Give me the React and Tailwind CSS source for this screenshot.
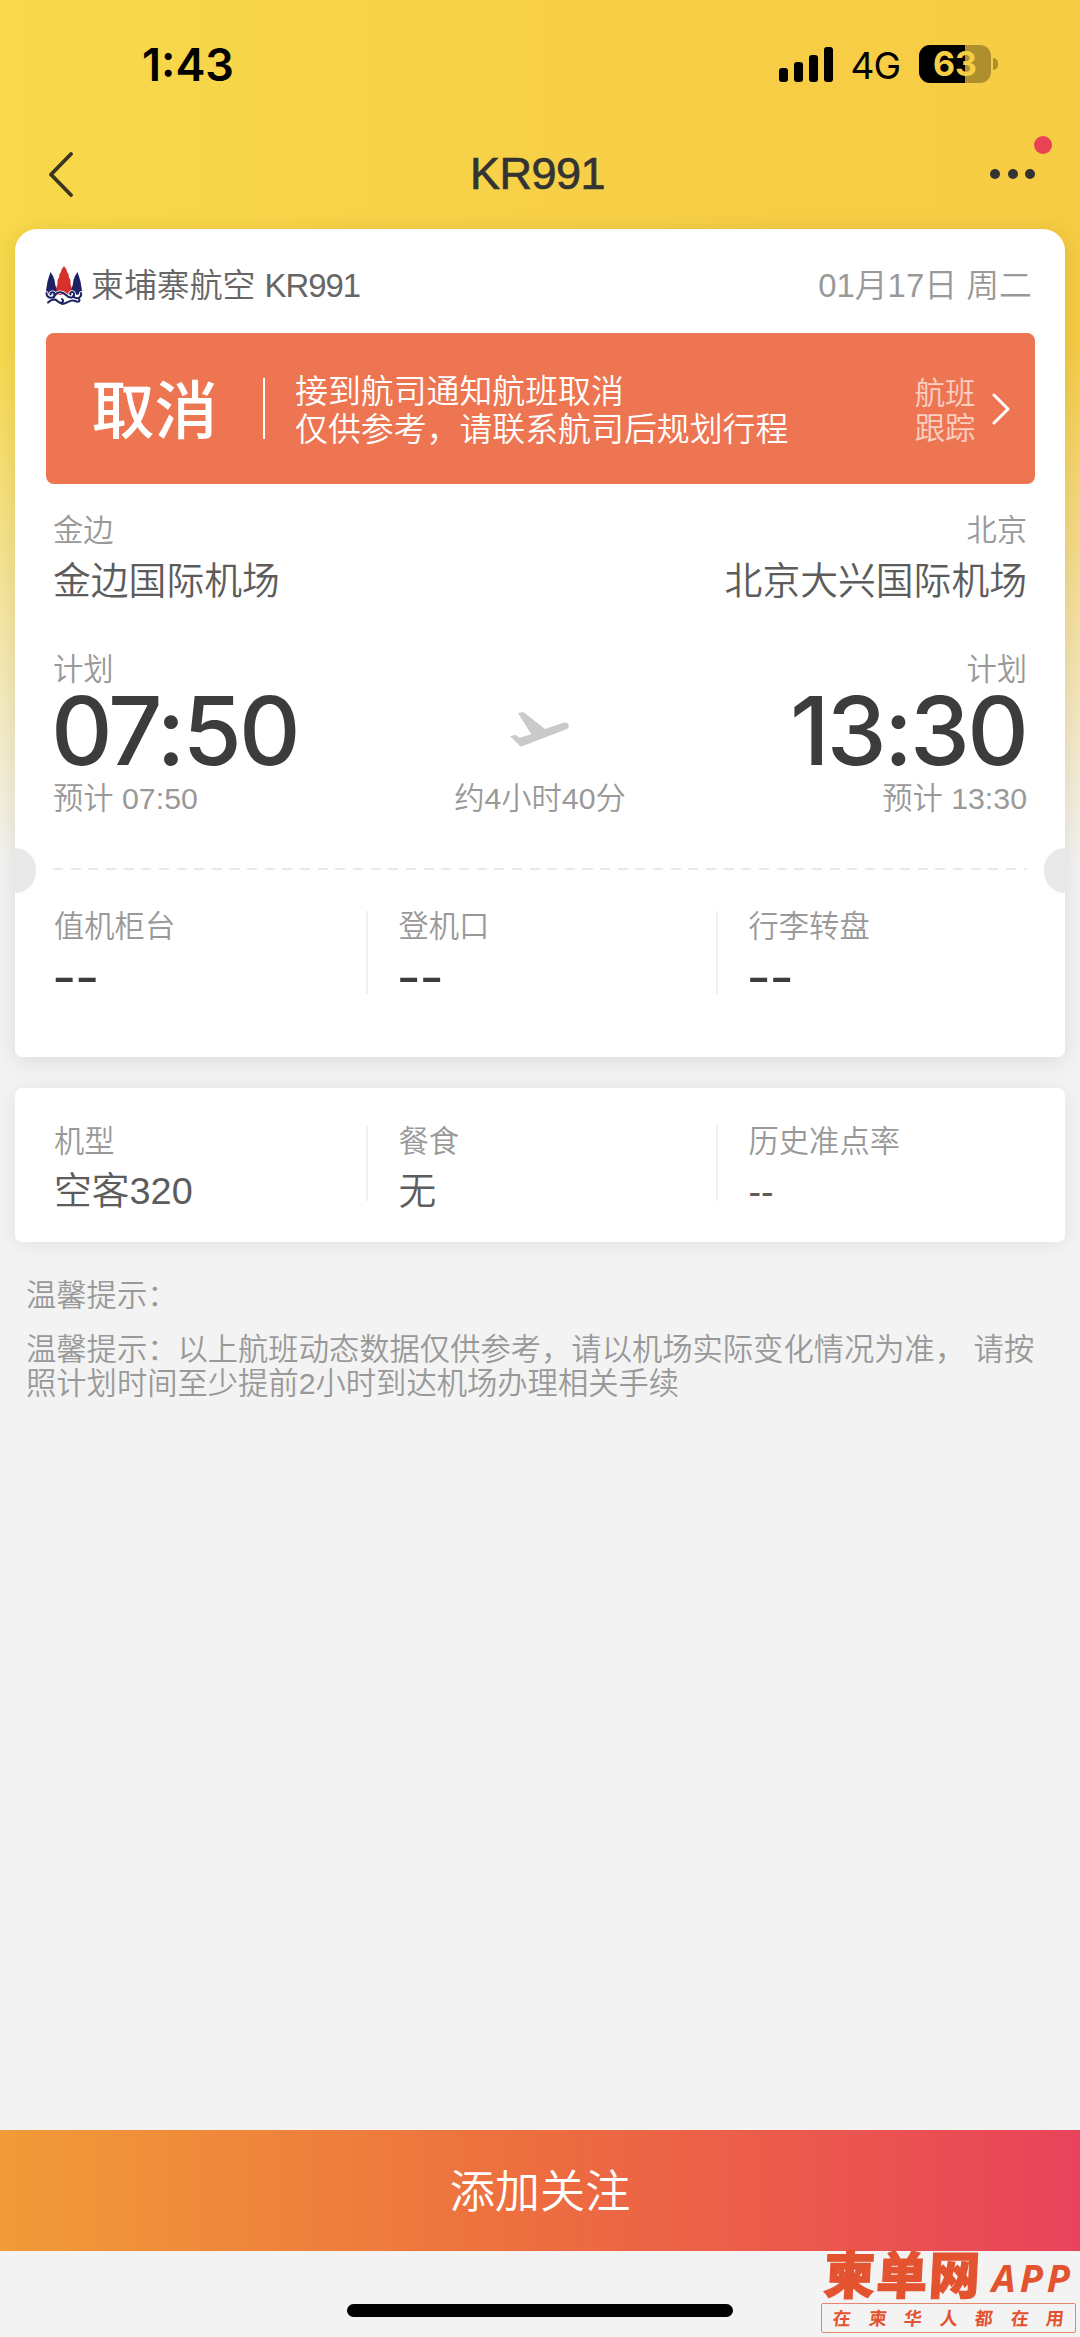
const SIGNAL_BARS = ['h-[14px]', 'h-[20px]', 'h-[27px]', 'h-[35px]']

const GATE_INFO = [
  { label: '值机柜台', value: '--' },
  { label: '登机口', value: '--' },
  { label: '行李转盘', value: '--' },
]

const PLANE_INFO = [
  { label: '机型', value: '空客320' },
  { label: '餐食', value: '无' },
  { label: '历史准点率', value: '--' },
]

const WAVES = 'M1.500 27c0 6 8 6 8 1.500c0-3-4-3-4 0M9 31c3-6 8-6 12-2s9 3 8-1.500c-1-3-5-1-3.500 1M36 27c1 5-5 7-8 3M3 36.500c4-4 7-4 10-1s7 0 4-2.500M17 38c5 0 8-5 13-3s5-1 4-2'

function AirlineLogo() {
  return (
    <svg viewBox="0 0 38 40" className="h-[40px] w-[38px]">
      <path d="M5.500 6l2.500 4 1.500 4 1 6 2.500 4.500-.5 5-8-1-3.500-4 1.500-9 1.500-5z" fill="#1d2164" />
      <path d="M32.500 6l-2.500 4-1.500 4-1 6-2.500 4.500.5 5 8-1 3.500-4-1.500-9-1.500-5z" fill="#1d2164" />
      <path d="M19 0l2.500 3.500 .5 2.500 1.500 2 .5 3.500 1.500 2.500v4l1 3v4l-2 4H13.500l-2-4v-4l1-3v-4l1.500-2.500.5-3.500 1.500-2L16.500 3.500z" fill="#d7302b" />
      <path d={WAVES} fill="none" stroke="#fff" strokeWidth="3.600" strokeLinecap="round" />
      <path d={WAVES} fill="none" stroke="#1d2164" strokeWidth="2" strokeLinecap="round" />
    </svg>
  )
}

function StatusBar() {
  return (
    <div className="flex h-[128px] items-center pl-[142px] pr-[82px] font-['Inter'] text-black">
      <span className="text-[45px] font-semibold leading-none">1:43</span>
      <div className="ml-auto flex items-center">
        <div className="flex items-end gap-[5.500px]">
          {SIGNAL_BARS.map((h) => (
            <div key={h} className={`w-[9.500px] rounded-[3px] bg-black ${h}`} />
          ))}
        </div>
        <span className="ml-[17px] pt-[2px] text-[37px] leading-none tracking-[-1px]">4G</span>
        <div className="ml-[19px] flex h-[38px] w-[72px] items-center justify-center rounded-[11px] bg-[linear-gradient(90deg,#000_64%,#ad8f2d_64%)] text-[34px] font-bold leading-none text-[#f6ce45]">
          63
        </div>
        <div className="ml-[2px] h-[12px] w-[5px] rounded-r-full bg-[#ad8f2d]" />
      </div>
    </div>
  )
}

function NavBar() {
  return (
    <div className="flex h-[101px] items-start justify-between pl-[48px] pr-[45px] pt-[23px] text-[#333]">
      <svg viewBox="0 0 26 46" className="h-[46px] w-[26px]" fill="none" stroke="#3a361f" strokeWidth="3.800" strokeLinecap="round" strokeLinejoin="round">
        <path d="M23 3L3 23.500L23 44" />
      </svg>
      <h1 className="-mt-[1px] ml-[11px] text-[45px] leading-[48px] tracking-[-0.500px] [-webkit-text-stroke:0.700px_#333]">KR991</h1>
      <div className="relative flex gap-[7.500px] pt-[18px]">
        <i className="size-[10px] rounded-full bg-[#333]" />
        <i className="size-[10px] rounded-full bg-[#333]" />
        <i className="size-[10px] rounded-full bg-[#333]" />
        <i className="absolute -right-[17px] -top-[15px] size-[18px] rounded-full bg-[#ea4255]" />
      </div>
    </div>
  )
}

function CancelBanner() {
  return (
    <div className="mx-[30.500px] flex h-[151px] items-center rounded-[8px] bg-[#ed7552] pl-[46px] pr-[25px] text-white">
      <span className="pt-[5px] text-[63px] font-medium leading-none">取消</span>
      <div className="ml-[45px] h-[61px] w-[2.500px] bg-white" />
      <p className="ml-[30px] pt-[5px] text-[32.900px] font-[350] leading-[38px]">
        接到航司通知航班取消<br />仅供参考，请联系航司后规划行程
      </p>
      <p className="ml-auto pt-[5px] text-[30.400px] font-[350] leading-[35.500px] text-white/65">航班<br />跟踪</p>
      <svg viewBox="0 0 18 32" className="ml-[16px] h-[32px] w-[18px]" fill="none" stroke="#fff" strokeWidth="3" strokeLinecap="round" strokeLinejoin="round">
        <path d="M2 2L16 16L2 30" />
      </svg>
    </div>
  )
}

function Airport({ city, name, time, right }) {
  return (
    <div className={right ? 'text-right' : ''}>
      <p className="text-[30.300px] font-[350] leading-[44px] text-[#999]">{city}</p>
      <p className="mt-[2px] text-[37.800px] font-[350] leading-[52px] text-[#5c5c5c]">{name}</p>
      <p className="mt-[41px] text-[30.300px] font-[350] leading-[44px] text-[#999]">计划</p>
      <p className={`-mt-[2px] font-['Inter'] text-[95.500px] font-medium leading-[80px] tracking-[-2.800px] text-[#3c3c3c] ${right ? 'mr-[1px]' : '-ml-[2px]'}`}>{time}</p>
      <p className="mt-[7px] text-[30.300px] font-[350] leading-[44px] text-[#999]">预计 {time}</p>
    </div>
  )
}

function InfoColumns({ items, big }) {
  return (
    <div className="grid grid-cols-[312px_350px_1fr] pl-[39px]">
      {items.map((item, i) => (
        <div key={item.label} className={`relative ${i ? 'pl-[32.500px]' : ''}`}>
          {i > 0 && <div className={`absolute left-0 w-[2px] bg-[#f0f0f0] ${big ? 'top-[6px] h-[83px]' : 'top-[5px] h-[76px]'}`} />}
          <p className="text-[30.300px] font-[350] leading-[44px] text-[#999]">{item.label}</p>
          {big ? (
            <p className="-ml-[2px] font-['Inter'] text-[53px] leading-[57px] tracking-[-1.500px] text-[#3c3c3c]">{item.value}</p>
          ) : (
            <p className="mt-[1px] text-[37.800px] font-[350] leading-[52px] text-[#5c5c5c]">{item.value}</p>
          )}
        </div>
      ))}
    </div>
  )
}

function Watermark() {
  return (
    <div className="absolute right-[4px] top-[2px] w-[255px] text-[#e4532f]">
      <div className="flex items-center justify-between">
        <span className="ml-[3px] -skew-x-3 text-[51px] font-black leading-[48px] tracking-[1.500px] [-webkit-text-stroke:1.200px_#e4532f]">柬单网</span>
        <span className="pr-[2px] font-['Noto_Sans'] text-[38px] font-bold italic leading-none tracking-[4px]">APP</span>
      </div>
      <div className="mt-[2px] flex h-[30px] items-center justify-between rounded-[2px] border border-[#e4532f]/70 px-[11px] pt-[2px]">
        {[...'在柬华人都在用'].map((c, i) => (
          <span key={i} className="-skew-x-6 text-[18px] font-bold leading-none">{c}</span>
        ))}
      </div>
    </div>
  )
}

export default function App() {
  return (
    <div className="flex h-[2337px] w-[1080px] flex-col overflow-hidden bg-[#f3f3f3] bg-[linear-gradient(180deg,transparent_340px,#f3f3f3_870px),linear-gradient(90deg,#f8d94a,#f7d047_50%,#f6cc43)] font-['Liberation_Sans','Noto_Sans_CJK_SC',sans-serif]">
      <StatusBar />
      <NavBar />

      <section className="relative mx-[15px] h-[828px] shrink-0 rounded-b-[7px] rounded-t-[22px] bg-white shadow-[0_4px_24px_rgba(0,0,0,0.1)]">
        <div className="flex h-[104px] items-center pl-[30px] pr-[33px] pt-[10px] text-[32.900px] font-[350]">
          <AirlineLogo />
          <span className="ml-[8px] text-[#666]">柬埔寨航空 <span className="tracking-[-1px]">KR991</span></span>
          <span className="ml-auto text-[#999]">01月17日 周二</span>
        </div>
        <CancelBanner />
        <div className="mt-[25px] grid grid-cols-[1fr_auto_1fr] pl-[38px] pr-[38px]">
          <Airport city="金边" name="金边国际机场" time="07:50" />
          <div className="flex flex-col items-center self-end">
            <svg viewBox="0 0 60 38" className="mb-[28px] h-[38px] w-[60px]" fill="#cacaca">
              <path d="M8 2.300L13.300 1L35 18L54 11.500C58.500 10.500 60.500 16 57 18L10.700 35.700L0 25L5.700 24L9.700 26.700L21.300 23.300Z" />
            </svg>
            <p className="text-[30.300px] font-[350] leading-[44px] text-[#999]">约4小时40分</p>
          </div>
          <Airport city="北京" name="北京大兴国际机场" time="13:30" right />
        </div>
        <div className="mx-[38px] mt-[47px] h-[2px] bg-[repeating-linear-gradient(90deg,#e8e8e8_0_10px,transparent_10px_17.650px)]" />
        <div className="mt-[35px]">
          <InfoColumns items={GATE_INFO} big />
        </div>
        <div className="absolute left-0 top-[619px] h-[45px] w-[21px] rounded-r-full bg-[#e9e9e9]" />
        <div className="absolute right-0 top-[619px] h-[45px] w-[21px] rounded-l-full bg-[#e9e9e9]" />
      </section>

      <section className="mx-[15px] mt-[31px] h-[154px] shrink-0 rounded-[7px] bg-white pt-[32px] shadow-[0_2px_20px_rgba(0,0,0,0.08)]">
        <InfoColumns items={PLANE_INFO} />
      </section>

      <div className="mt-[37px] px-[26px] text-[30.300px] font-[350] leading-[34.700px] text-[#999]">
        <p>温馨提示：</p>
        <p className="mt-[19px] whitespace-nowrap">
          温馨提示：以上航班动态数据仅供参考，请以机场实际变化情况为准， 请按<br />
          照计划时间至少提前2小时到达机场办理相关手续
        </p>
      </div>

      <button className="mt-auto h-[121px] shrink-0 bg-[linear-gradient(90deg,#f19b38,#ed6d3f_50%,#e9435b)] pt-[5px] text-[45.200px] font-[350] text-white">
        添加关注
      </button>
      <div className="relative flex h-[86px] shrink-0 justify-center pt-[53px]">
        <div className="h-[13px] w-[386px] rounded-full bg-black" />
        <Watermark />
      </div>
    </div>
  )
}
